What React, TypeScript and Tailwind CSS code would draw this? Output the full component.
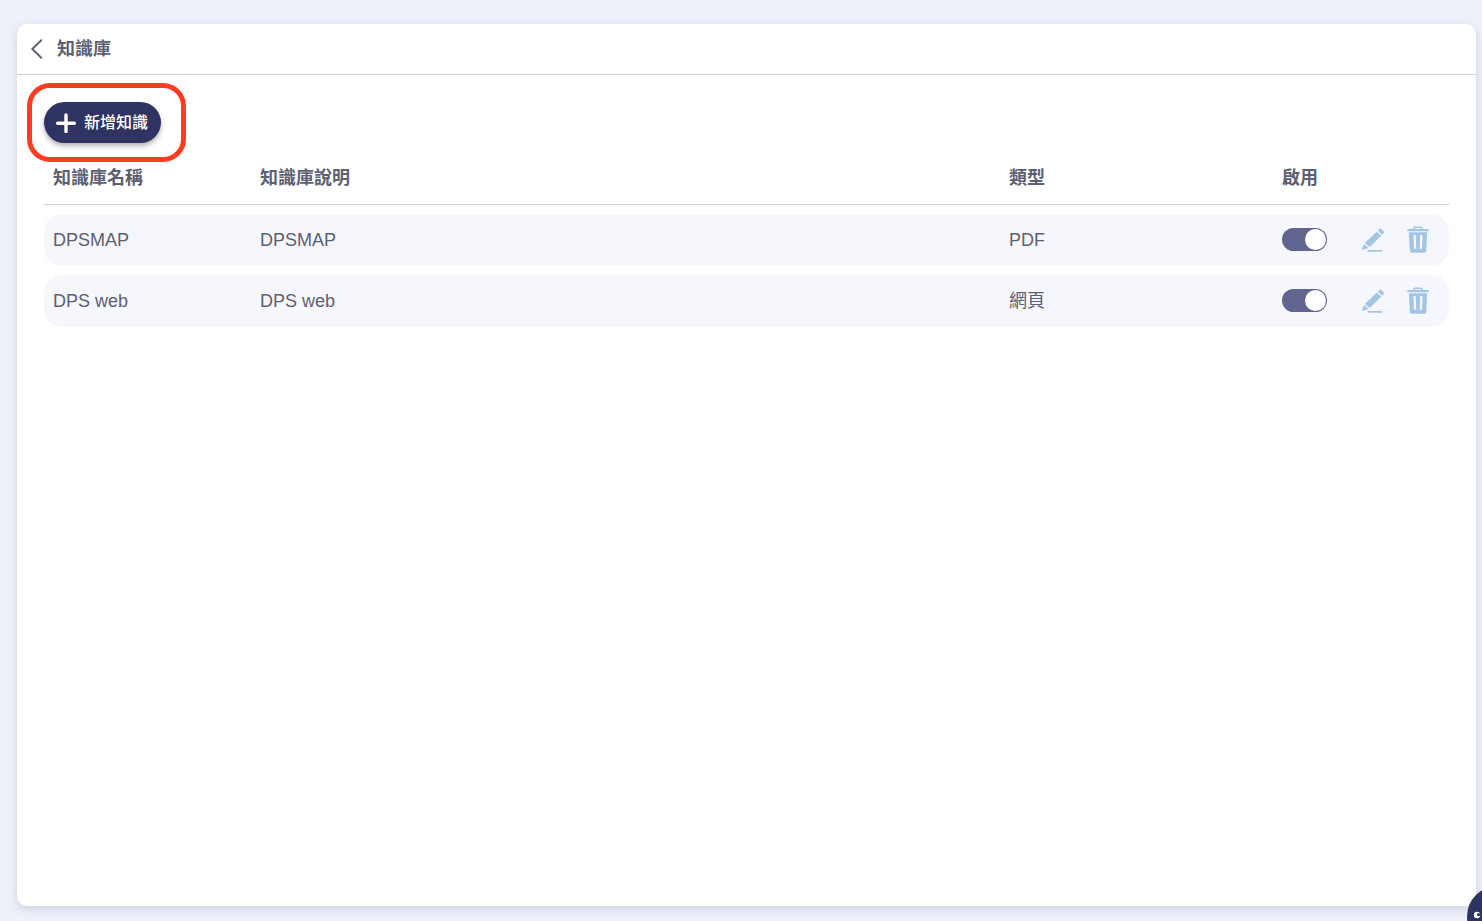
import { useState } from "react";

type Knowledge = { name: string; description: string; type: string };

const ITEMS: Knowledge[] = [
  { name: "DPSMAP", description: "DPSMAP", type: "PDF" },
  { name: "DPS web", description: "DPS web", type: "網頁" },
];

function BackIcon() {
  return (
    <svg className="h-5 w-3" viewBox="0 0 12 20" fill="none" stroke="#5d6072" strokeWidth="1.9" strokeLinecap="round" strokeLinejoin="round" aria-hidden="true">
      <path d="M10.3 1.2 1.3 10l9 8.8" />
    </svg>
  );
}

function PlusIcon() {
  return (
    <svg className="size-5" viewBox="0 0 20 20" stroke="white" strokeWidth="3.4" strokeLinecap="round" aria-hidden="true">
      <path d="M10 1.9v16.6M1.7 10.2h16.6" />
    </svg>
  );
}

function PencilIcon() {
  return (
    <svg className="h-6 w-[22px]" viewBox="0 0 22 24" fill="#a4c6e3" aria-hidden="true">
      <path d="M17.4 1c.6-.6 1.300-.6 1.900 0l2.300 2.300c.6.6.6 1.300 0 1.900L20 6.800 15.800 2.600zM14.900 3.500l4.200 4.200L7.700 19.100l-4.900-4.200zM1.900 15.900l4.700 4-5.700 1.900c-.6.200-1-.2-.8-.8z" />
      <rect x="5.400" y="22" width="15" height="1.800" rx=".6" />
    </svg>
  );
}

function TrashIcon() {
  return (
    <svg className="h-[27px] w-[22px]" viewBox="0 0 22 27" fill="#a4c6e3" aria-hidden="true">
      <path d="M1 3h5V2.400C6 1.100 7 .4 8.200.4h5.200c1.400 0 2.400.7 2.400 2V3H21c1 0 1 2.200 0 2.200H.9C-.1 5.200-.1 3 1 3zM7.700 3h6.400v-.4c0-.5-.2-.7-.7-.7h-5c-.5 0-.7.200-.7.7z" fillRule="evenodd" />
      <path d="M1.800 6.200h18.400l-1 18.700c-.1 1.200-.8 1.800-1.900 1.800H4.700c-1.100 0-1.800-.6-1.900-1.800zM6.500 9l.5 13.800h2.200L8.800 9zM13.200 9l-.4 13.800H15L15.500 9z" fillRule="evenodd" />
    </svg>
  );
}

function Row({ item }: { item: Knowledge }) {
  const [enabled, setEnabled] = useState(true);
  return (
    <tr className="h-[52px] *:bg-[#f6f7fc] *:px-[9px] *:pb-px">
      <td className="rounded-l-[18px]">{item.name}</td>
      <td>{item.description}</td>
      <td>{item.type}</td>
      <td>
        <input
          type="checkbox"
          aria-label={`啟用 ${item.name}`}
          checked={enabled}
          onChange={(e) => setEnabled(e.target.checked)}
          className="block h-[23px] w-[45px] cursor-pointer appearance-none rounded-full bg-[#c3c5d6] p-px before:block before:size-[21px] before:rounded-full before:bg-white checked:bg-[#61658f] checked:before:translate-x-[22px]"
        />
      </td>
      <td className="rounded-r-[18px]">
        <div className="flex items-center gap-[23px]">
          <button type="button" aria-label={`編輯 ${item.name}`} className="cursor-pointer">
            <PencilIcon />
          </button>
          <button type="button" aria-label={`刪除 ${item.name}`} className="cursor-pointer">
            <TrashIcon />
          </button>
        </div>
      </td>
    </tr>
  );
}

export default function App() {
  return (
    <div className="flex min-h-screen flex-col bg-[#eef1fa] pt-6 pr-1.5 pb-[15px] pl-[17px] font-['Liberation_Sans','Noto_Sans_CJK_TC',sans-serif] text-lg leading-6 text-[#5d6072]">
      <main className="flex grow flex-col rounded-[10px] bg-white shadow-[0_3px_10px_rgba(60,70,110,0.18)]">
        <header className="flex h-[51px] items-center gap-[14px] border-b border-[#d0d1de] px-[14px]">
          <button type="button" aria-label="返回" className="cursor-pointer">
            <BackIcon />
          </button>
          <h1 className="font-bold">知識庫</h1>
        </header>
        <div className="px-[27px] pt-[27px]">
          <div className="relative w-fit">
            <button type="button" className="flex h-[41px] cursor-pointer items-center gap-2 rounded-full bg-[#2e3362] pr-[13px] pl-3 text-base font-medium text-white shadow-[0_3px_5px_rgba(0,0,0,0.3)]">
              <PlusIcon />
              新增知識
            </button>
            <div className="pointer-events-none absolute -top-[19px] -right-[25px] -bottom-[19px] -left-[17px] rounded-[23px] border-[5px] border-[#ff3b20]" />
          </div>
          <table className="-mt-px w-full table-fixed border-separate border-spacing-x-0 border-spacing-y-[9px] text-left">
            <thead>
              <tr className="h-[54px] *:border-b *:border-[#d0d1de] *:px-[9px] *:font-bold">
                <th className="w-[207px]">知識庫名稱</th>
                <th>知識庫說明</th>
                <th className="w-[273px]">類型</th>
                <th className="w-20">啟用</th>
                <td className="w-24" />
              </tr>
            </thead>
            <tbody>
              {ITEMS.map((item) => (
                <Row key={item.name} item={item} />
              ))}
            </tbody>
          </table>
        </div>
      </main>
      <div className="pointer-events-none fixed inset-0 overflow-hidden">
        <button type="button" aria-label="聊天助理" className="pointer-events-auto absolute -right-[46px] -bottom-[26px] size-[61px] cursor-pointer rounded-full bg-[#2e3362]">
          <svg className="size-full" viewBox="0 0 61 61" aria-hidden="true">
            <circle cx="10" cy="29" r="3.200" fill="white" />
            <circle cx="11.600" cy="28.600" r="1.600" fill="#2e3362" />
          </svg>
        </button>
      </div>
    </div>
  );
}
